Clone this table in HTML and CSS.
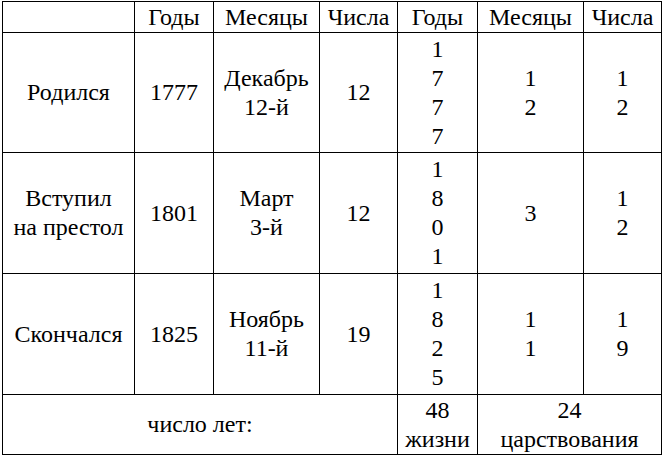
FILE: index.html
```html
<!DOCTYPE html>
<html lang="ru">
<head>
<meta charset="utf-8">
<title>Таблица</title>
<link rel="stylesheet" href="styles.css">
</head>
<body>
<div class="chron">
  <div class="cell"></div>
  <div class="cell">Годы</div>
  <div class="cell">Месяцы</div>
  <div class="cell">Числа</div>
  <div class="cell">Годы</div>
  <div class="cell">Месяцы</div>
  <div class="cell">Числа</div>

  <div class="cell">Родился</div>
  <div class="cell">1777</div>
  <div class="cell">Декабрь<br>12-й</div>
  <div class="cell">12</div>
  <div class="cell">1<br>7<br>7<br>7</div>
  <div class="cell">1<br>2</div>
  <div class="cell">1<br>2</div>

  <div class="cell">Вступил<br>на престол</div>
  <div class="cell">1801</div>
  <div class="cell">Март<br>3-й</div>
  <div class="cell">12</div>
  <div class="cell">1<br>8<br>0<br>1</div>
  <div class="cell">3</div>
  <div class="cell">1<br>2</div>

  <div class="cell">Скончался</div>
  <div class="cell">1825</div>
  <div class="cell">Ноябрь<br>11-й</div>
  <div class="cell">19</div>
  <div class="cell">1<br>8<br>2<br>5</div>
  <div class="cell">1<br>1</div>
  <div class="cell">1<br>9</div>

  <div class="cell span4">число лет:</div>
  <div class="cell">48<br>жизни</div>
  <div class="cell span2">24<br>царствования</div>
</div>
</body>
</html>
```

FILE: styles.css
```css
html, body {
  margin: 0;
  padding: 0;
  background: #ffffff;
}

body {
  padding: 1px 0 0 2px;
  font-family: "Liberation Serif", "Times New Roman", serif;
}

.chron {
  display: grid;
  grid-template-columns: 132px 79px 106px 78px 80px 106px 78px;
  grid-template-rows: 31px 120px 121px 121px 60px;
  width: max-content;
  border-left: 1px solid #000000;
  border-top: 1px solid #000000;
  color: #000000;
  font-family: "Liberation Serif", "Times New Roman", serif;
  font-size: 24px;
  line-height: 29px;
}

.cell {
  box-sizing: border-box;
  display: flex;
  align-items: center;
  justify-content: center;
  text-align: center;
  white-space: nowrap;
  border-right: 1px solid #000000;
  border-bottom: 1px solid #000000;
  font-family: "Liberation Serif", "Times New Roman", serif;
}

.span4 { grid-column: span 4; }
.span2 { grid-column: span 2; }
```
